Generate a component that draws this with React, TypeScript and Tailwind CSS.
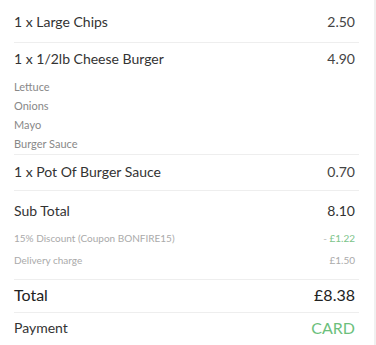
export default function App() {
  const extras = ["Lettuce", "Onions", "Mayo", "Burger Sauce"];

  return (
    <div className="w-[376px] h-[345px] bg-white flex font-['Lato',sans-serif] overflow-hidden">
      <div className="flex-1 pl-[14px] pr-[15px]">
        {/* items */}
        <div className="flex justify-between items-center h-[43px] pt-[1px] border-b border-[#eeeeee] text-[14px] text-[#333]">
          <span>1 x Large Chips</span>
          <span className="pr-[4px] text-[#444]">2.50</span>
        </div>

        <div className="border-b border-[#eeeeee] pb-[1px]">
          <div className="flex justify-between items-center h-[31px] text-[14px] text-[#333]">
            <span>1 x 1/2lb Cheese Burger</span>
            <span className="pr-[4px] text-[#444]">4.90</span>
          </div>
          <div className="flex flex-col mt-[3px] text-[11px] text-[#888] leading-[19px]">
            {extras.map((x) => (
              <span key={x}>{x}</span>
            ))}
          </div>
        </div>

        <div className="flex justify-between items-center h-[36px] pb-[3px] border-b border-[#eeeeee] text-[14px] text-[#333]">
          <span>1 x Pot Of Burger Sauce</span>
          <span className="pr-[4px] text-[#444]">0.70</span>
        </div>

        {/* totals */}
        <div className="border-b border-[#eeeeee] pt-[6px] pb-[8px]">
          <div className="flex justify-between items-center h-[26px] text-[14px] text-[#333]">
            <span>Sub Total</span>
            <span className="pr-[4px]">8.10</span>
          </div>
          <div className="flex justify-between items-center h-[22px] mt-[4px] text-[10px] text-[#aaa]">
            <span>15% Discount (Coupon BONFIRE15)</span>
            <span className="pr-[4px] text-[#7cc48a]">
              <span className="text-[#bbb]">-</span> £1.22
            </span>
          </div>
          <div className="flex justify-between items-center h-[22px] text-[10px] text-[#aaa]">
            <span>Delivery charge</span>
            <span className="pr-[4px]">£1.50</span>
          </div>
        </div>

        <div className="flex justify-between items-center h-[33px] pb-[2px] border-b border-[#eeeeee] text-[16px] text-[#222]">
          <span>Total</span>
          <span className="pr-[4px]">£8.38</span>
        </div>

        <div className="flex justify-between items-center h-[29px] text-[14px] text-[#333]">
          <span>Payment</span>
          <span className="pr-[4px] text-[16px] text-[#6cbf7c]">CARD</span>
        </div>
      </div>
      <div className="w-[2px] bg-[#f0f0f0]" />
    </div>
  );
}
